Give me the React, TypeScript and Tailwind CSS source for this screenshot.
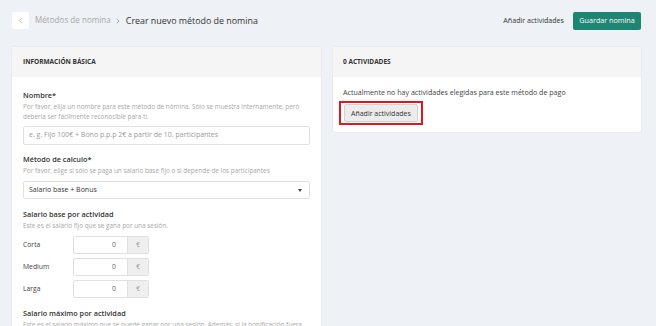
import { ChevronLeft, ChevronRight } from 'lucide-react';

const rows = ['Corta', 'Medium', 'Larga'];

function Label({ children }: { children: React.ReactNode }) {
  return <div className="text-[7.3px] font-semibold text-[#333] leading-[12px]">{children}</div>;
}

function Help({ children }: { children: React.ReactNode }) {
  return <p className="text-[6.4px] text-[#a8a8a8] leading-[10px]">{children}</p>;
}

export default function App() {
  return (
    <div className="w-[656px] h-[326px] overflow-hidden bg-[#eef1f5] font-['Open_Sans',sans-serif] text-[#333]">
      <div className="flex items-center h-[42px] px-3 pb-[1px]">
        <button className="w-[17px] h-[17px] bg-white rounded-[2px] flex items-center justify-center text-[#999]">
          <ChevronLeft size={9} strokeWidth={1.5} />
        </button>
        <span className="ml-[6px] text-[8.1px] text-[#a8a8a8]">Métodos de nomina</span>
        <ChevronRight size={8} strokeWidth={1.5} className="ml-[3px] mr-[4px] text-[#666]" />
        <span className="text-[8.9px] text-[#333]">Crear nuevo método de nomina</span>
        <span className="ml-auto mr-[9px] text-[7.1px] text-[#333]">Añadir actividades</span>
        <button className="w-[68px] h-[18px] bg-[#1e8572] text-white text-[7.2px] rounded-[2px]">Guardar nomina</button>
        <div className="w-[3px]" />
      </div>
      <div className="flex gap-3 px-3 pt-[5px] items-start">
        <div className="w-[309px] bg-white rounded-[2px] shadow-[0_0_2px_rgba(0,0,0,0.1)]">
          <div className="h-[30px] bg-[#f5f5f5] flex items-center px-[11px] text-[6.5px] font-bold">INFORMACIÓN BÁSICA</div>
          <div className="px-[11px] pt-[12px]">
            <Label>Nombre*</Label>
            <div className="mt-[1px] pr-[8px]">
              <Help>Por favor, elija un nombre para este método de nómina. Sólo se muestra internamente, pero debería ser fácilmente reconocible para ti.</Help>
            </div>
            <div className="mt-[4px] h-[19px] border border-[#e0e0e0] rounded-[2px] flex items-center px-[5px] text-[7px] text-[#9a9a9a]">
              e. g. Fijo 100€ + Bono p.p.p 2€ a partir de 10. participantes
            </div>
            <div className="mt-[8px]"><Label>Método de calculo*</Label></div>
            <div className="mt-[1px]"><Help>Por favor, elige si sólo se paga un salario base fijo o si depende de los participantes</Help></div>
            <div className="mt-[5px] h-[18px] border border-[#e0e0e0] rounded-[2px] flex items-center pl-[5px] pr-[7px] text-[7px] text-[#333]">
              Salario base + Bonus
              <span className="ml-auto w-0 h-0 border-l-[2.5px] border-r-[2.5px] border-t-[3px] border-l-transparent border-r-transparent border-t-[#444]" />
            </div>
            <div className="mt-[9px]"><Label>Salario base por actividad</Label></div>
            <div className="mt-[1px]"><Help>Este es el salario fijo que se gana por una sesión.</Help></div>
            <div className="mt-[5px] flex flex-col gap-[4px]">
              {rows.map(r => (
                <div key={r} className="flex items-center">
                  <span className="w-[50px] text-[6.8px] text-[#444]">{r}</span>
                  <div className="w-[76px] h-[18px] border border-[#e0e0e0] rounded-[2px] flex overflow-hidden">
                    <div className="flex-1 flex items-center justify-end pr-[11px] text-[6.8px] text-[#666]">0</div>
                    <div className="w-[21px] bg-[#efefef] border-l border-[#e0e0e0] flex items-center justify-center text-[6.5px] text-[#999]">€</div>
                  </div>
                </div>
              ))}
            </div>
            <div className="mt-[9px]"><Label>Salario máximo por actividad</Label></div>
            <div className="mt-[1px]"><Help>Este es el salario máximo que se puede ganar por una sesión. Además, si la bonificación fuera mayor, no se pagaría más.</Help></div>
          </div>
        </div>
        <div className="w-[308px] bg-white rounded-[2px] shadow-[0_0_2px_rgba(0,0,0,0.1)] pb-[7px]">
          <div className="h-[30px] bg-[#f5f5f5] flex items-center px-[10px] text-[6.5px] font-bold">0 ACTIVIDADES</div>
          <div className="px-[10px] pt-[10px]">
            <p className="text-[7.1px] text-[#444] leading-[11px]">Actualmente no hay actividades elegidas para este método de pago</p>
            <div className="mt-[3px] ml-[-4px] w-fit flex border-2 border-[#e8141c] py-[1px] px-[3px]">
              <button className="h-[18px] px-[6px] bg-[#ececec] border border-[#d2d2d2] rounded-[2px] text-[7px] text-[#333] leading-none">Añadir actividades</button>
            </div>
          </div>
        </div>
      </div>
    </div>
  );
}
